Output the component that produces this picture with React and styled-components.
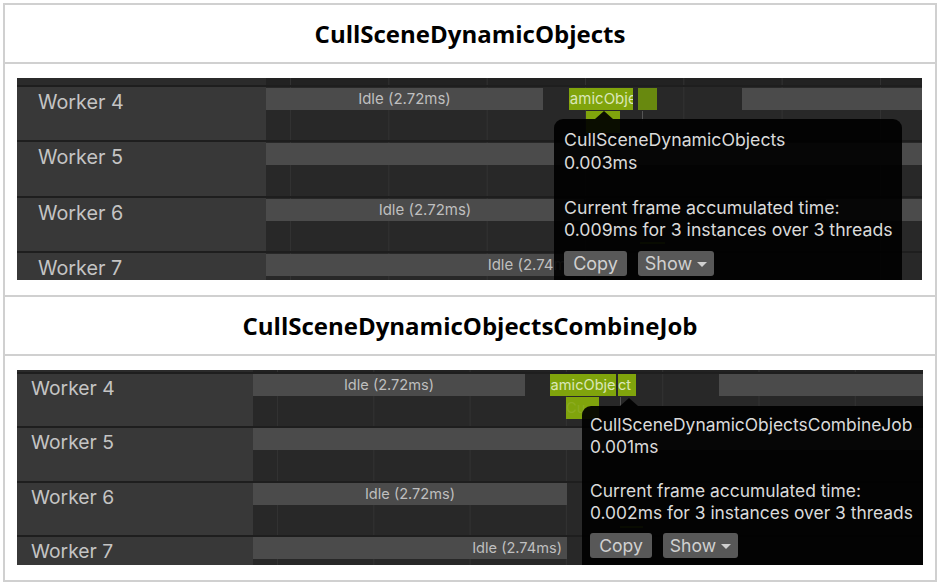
import React from "react";
import styled, { createGlobalStyle } from "styled-components";

const GlobalStyle = createGlobalStyle`
  body {
    margin: 0;
    background: #ffffff;
    font-family: "Inter", "Liberation Sans", sans-serif;
  }
`;

// Colours of the profiler timeline
const barColors = {
  idle: "#4b4b4b",
  green: "#80a40c",
  dark: "#68890f",
  tick: "#555555",
};

const panels = [
  {
    title: "CullSceneDynamicObjects",
    width: 905,
    height: 202,
    strip: 7,
    rowH: 55.4,
    labelW: 249,
    labelPad: 21,
    labelTop: 4,
    labelSize: 19.8,
    barTop: 1,
    barFont: 15,
    grid: { offset: 24, step: 98.33 },
    rows: [
      {
        name: "Worker 4",
        bars: [
          { x: 0, w: 277, text: "Idle (2.72ms)" },
          { x: 303, w: 64, kind: "green", text: "namicObjects", indent: -8 },
          { x: 372, w: 19, kind: "dark" },
          { x: 320, w: 34, kind: "green", lane: 1 },
          { x: 376, w: 1, kind: "tick", lane: 1, h: 10 },
          { x: 476, w: 320 },
        ],
      },
      { name: "Worker 5", bars: [{ x: 0, w: 700 }] },
      {
        name: "Worker 6",
        bars: [
          { x: 0, w: 318, text: "Idle (2.72ms)" },
          { x: 374, w: 25, kind: "dark", top: 44, h: 2 },
          { x: 560, w: 200 },
        ],
      },
      {
        name: "Worker 7",
        bars: [{ x: 0, w: 319, text: "Idle (2.74ms)", align: "end" }],
      },
    ],
    tip: {
      left: 537,
      top: 41,
      width: 348,
      arrow: 50,
      padTop: 10,
      padLeft: 10,
      font: 17.7,
      line: 22.5,
      name: "CullSceneDynamicObjects",
      time: "0.003ms",
      total: "0.009ms for 3 instances over 3 threads",
      gap: 9,
      btnCopy: 63,
      btnShow: 76,
      btnFont: 18,
    },
  },
  {
    title: "CullSceneDynamicObjectsCombineJob",
    width: 906,
    height: 195,
    strip: 2,
    rowH: 54.3,
    labelW: 236,
    labelPad: 14,
    labelTop: 3,
    labelSize: 19.3,
    barTop: 0,
    barFont: 14.6,
    grid: { offset: 24, step: 96.3 },
    rows: [
      {
        name: "Worker 4",
        bars: [
          { x: 0, w: 272, text: "Idle (2.72ms)" },
          { x: 297, w: 66, kind: "green", text: "namicObject", indent: -8 },
          { x: 365, w: 18, kind: "green", text: "ct", align: "end" },
          { x: 313, w: 33, kind: "green", lane: 1, text: "Cu", faint: true },
          { x: 367, w: 1, kind: "tick", lane: 1, h: 9 },
          { x: 466, w: 320 },
        ],
      },
      { name: "Worker 5", bars: [{ x: 0, w: 700 }] },
      {
        name: "Worker 6",
        bars: [
          { x: 0, w: 314, text: "Idle (2.72ms)" },
          { x: 367, w: 23, kind: "dark", top: 43, h: 2 },
        ],
      },
      {
        name: "Worker 7",
        bars: [{ x: 0, w: 314, text: "Idle (2.74ms)", align: "end" }],
      },
    ],
    tip: {
      left: 565,
      top: 36,
      width: 360,
      arrow: 47,
      padTop: 8,
      padLeft: 8,
      font: 17.4,
      line: 22,
      name: "CullSceneDynamicObjectsCombineJob",
      time: "0.001ms",
      total: "0.002ms for 3 instances over 3 threads",
      gap: 9,
      btnCopy: 62,
      btnShow: 75,
      btnFont: 17.6,
    },
  },
];

const App = () => {
  return (
    <>
      <GlobalStyle />
      <Table>
        {panels.map((p) => (
          <React.Fragment key={p.title}>
            <HeaderCell>{p.title}</HeaderCell>
            <ImageCell>
              <Profiler panel={p} />
            </ImageCell>
          </React.Fragment>
        ))}
      </Table>
    </>
  );
};

const Profiler = ({ panel }) => {
  const { tip } = panel;
  return (
    <Panel $w={panel.width} $h={panel.height}>
      <Strip $h={panel.strip}>
        <StripLabel $w={panel.labelW} />
        <StripTrack $offset={panel.grid.offset} $step={panel.grid.step} />
      </Strip>
      {panel.rows.map((row) => (
        <Row key={row.name} $h={panel.rowH}>
          <Label
            $w={panel.labelW}
            $pad={panel.labelPad}
            $top={panel.labelTop}
            $size={panel.labelSize}
          >
            {row.name}
          </Label>
          <Track $offset={panel.grid.offset} $step={panel.grid.step}>
            {row.bars.map((b, i) => (
              <Bar
                key={i}
                $color={barColors[b.kind || "idle"]}
                $kind={b.kind || "idle"}
                $align={b.align}
                $faint={b.faint}
                $font={panel.barFont}
                style={{
                  left: b.x,
                  width: b.w,
                  top: b.top != null ? b.top : panel.barTop + (b.lane || 0) * 23,
                  height: b.h || 22,
                  textIndent: b.indent || 0,
                }}
              >
                {b.text}
              </Bar>
            ))}
          </Track>
        </Row>
      ))}
      <Tooltip
        $arrow={tip.arrow}
        $padTop={tip.padTop}
        $padLeft={tip.padLeft}
        $font={tip.font}
        $line={tip.line}
        style={{ left: tip.left, top: tip.top, width: tip.width }}
      >
        <TipLine>{tip.name}</TipLine>
        <TipLine>{tip.time}</TipLine>
        <TipLine>&nbsp;</TipLine>
        <TipLine>Current frame accumulated time:</TipLine>
        <TipLine>{tip.total}</TipLine>
        <ButtonRow $gap={tip.gap}>
          <TipButton $w={tip.btnCopy} $font={tip.btnFont}>
            Copy
          </TipButton>
          <TipButton $w={tip.btnShow} $font={tip.btnFont}>
            Show
            <Caret />
          </TipButton>
        </ButtonRow>
      </Tooltip>
    </Panel>
  );
};

export default App;

const Table = styled.div`
  margin: 3px;
  width: 934px;
  box-sizing: border-box;
  border: 2px solid #d0d0d0;
  border-bottom: none;
`;

const HeaderCell = styled.div`
  height: 59px;
  box-sizing: border-box;
  border-bottom: 2px solid #d0d0d0;
  display: flex;
  align-items: center;
  justify-content: center;
  font-family: "Open Sans", "Noto Sans", sans-serif;
  font-weight: 700;
  font-size: 24px;
  color: #000000;
`;

const ImageCell = styled.div`
  padding: 14px 12px 15px;
  border-bottom: 2px solid #d0d0d0;
`;

const Panel = styled.div`
  position: relative;
  overflow: hidden;
  width: ${(p) => p.$w}px;
  height: ${(p) => p.$h}px;
  background: #282828;
  display: flex;
  flex-direction: column;
  font-family: "Inter", "Liberation Sans", sans-serif;
`;

const gridBg = (p) => `
  background-color: #262626;
  background-image: linear-gradient(to right, #323232 0, #323232 1px, transparent 1px);
  background-size: ${p.$step}px 100%;
  background-position: ${p.$offset}px 0;
`;

const Strip = styled.div`
  display: flex;
  flex: none;
  height: ${(p) => p.$h}px;
`;

const StripLabel = styled.div`
  width: ${(p) => p.$w}px;
  flex: none;
  background: #2b2b2b;
`;

const StripTrack = styled.div`
  flex: 1;
  ${gridBg}
  background-color: #222222;
`;

const Row = styled.div`
  display: flex;
  flex: none;
  height: ${(p) => p.$h}px;
  box-sizing: border-box;
  border-top: 2px solid #1e1e1e;
`;

const Label = styled.div`
  width: ${(p) => p.$w}px;
  flex: none;
  box-sizing: border-box;
  background: #383838;
  color: #c4c4c4;
  font-size: ${(p) => p.$size}px;
  line-height: 22px;
  padding: ${(p) => p.$top}px 0 0 ${(p) => p.$pad}px;
`;

const Track = styled.div`
  flex: 1;
  position: relative;
  ${gridBg}
  background-color: #282828;
`;

const Bar = styled.div`
  position: absolute;
  box-sizing: border-box;
  overflow: hidden;
  white-space: nowrap;
  background: ${(p) => p.$color};
  color: ${(p) =>
    p.$kind === "idle" ? "#bfbfbf" : p.$faint ? "#8cac22" : "#dbe7b8"};
  font-size: ${(p) => p.$font}px;
  line-height: 22px;
  display: flex;
  justify-content: ${(p) =>
    p.$align === "end" ? "flex-end" : p.$kind === "idle" ? "center" : "flex-start"};
  padding-right: ${(p) => (p.$align === "end" ? 5 : 0)}px;
`;

const Tooltip = styled.div`
  position: absolute;
  height: 220px;
  box-sizing: border-box;
  background: rgba(0, 0, 0, 0.92);
  border-radius: 9px;
  padding: ${(p) => p.$padTop}px 0 0 ${(p) => p.$padLeft}px;
  color: #dadada;
  font-size: ${(p) => p.$font}px;
  line-height: ${(p) => p.$line}px;

  &::before {
    content: "";
    position: absolute;
    top: -8px;
    left: ${(p) => p.$arrow - 9}px;
    border-left: 9px solid transparent;
    border-right: 9px solid transparent;
    border-bottom: 8px solid rgba(0, 0, 0, 0.92);
  }
`;

const TipLine = styled.div`
  white-space: nowrap;
`;

const ButtonRow = styled.div`
  display: flex;
  gap: 11px;
  margin-top: ${(p) => p.$gap}px;
`;

const TipButton = styled.div`
  width: ${(p) => p.$w}px;
  height: 25px;
  box-sizing: border-box;
  display: flex;
  align-items: center;
  justify-content: center;
  gap: 5px;
  background: #585858;
  border-radius: 3px;
  color: #d0d0d0;
  font-size: ${(p) => p.$font}px;
  line-height: 25px;
`;

const Caret = styled.span`
  width: 0;
  height: 0;
  margin-top: 2px;
  border-left: 5px solid transparent;
  border-right: 5px solid transparent;
  border-top: 5px solid #d0d0d0;
`;
